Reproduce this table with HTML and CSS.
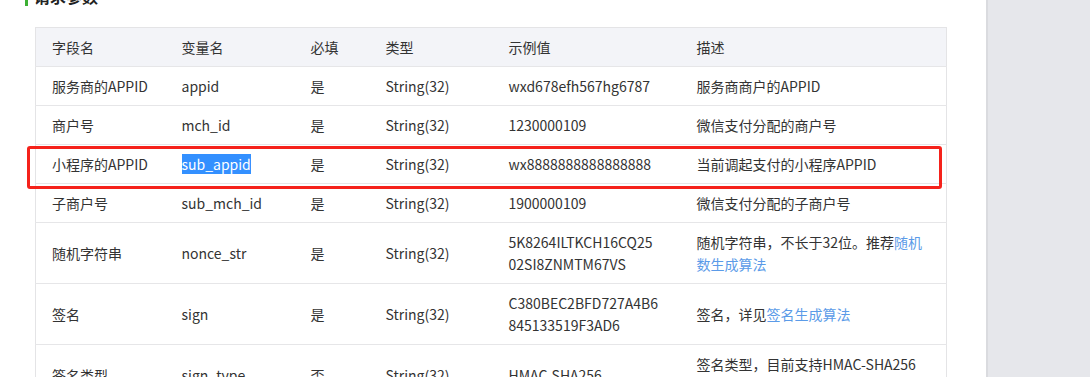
FILE: index.html
```html
<!DOCTYPE html>
<html lang="zh-CN">
<head>
    <meta charset="UTF-8">
    <meta name="viewport" content="width=device-width, initial-scale=1.0">
    <title>小程序支付 - 请求参数</title>
    <link rel="stylesheet" href="styles.css">
</head>
<body>
<div class="page">
    <div class="doc">
        <h3 class="section-title">请求参数</h3>

        <div class="table-wrap">
            <table class="params">
                <thead>
                    <tr>
                        <th class="c-name">字段名</th>
                        <th class="c-var">变量名</th>
                        <th class="c-req">必填</th>
                        <th class="c-type">类型</th>
                        <th class="c-demo">示例值</th>
                        <th class="c-desc">描述</th>
                    </tr>
                </thead>
                <tbody>
                    <tr>
                        <td>服务商的APPID</td>
                        <td>appid</td>
                        <td>是</td>
                        <td>String(32)</td>
                        <td>wxd678efh567hg6787</td>
                        <td>服务商商户的APPID</td>
                    </tr>
                    <tr>
                        <td>商户号</td>
                        <td>mch_id</td>
                        <td>是</td>
                        <td>String(32)</td>
                        <td>1230000109</td>
                        <td>微信支付分配的商户号</td>
                    </tr>
                    <tr>
                        <td>小程序的APPID</td>
                        <td><span class="selected">sub_appid</span></td>
                        <td>是</td>
                        <td>String(32)</td>
                        <td>wx8888888888888888</td>
                        <td>当前调起支付的小程序APPID</td>
                    </tr>
                    <tr>
                        <td>子商户号</td>
                        <td>sub_mch_id</td>
                        <td>是</td>
                        <td>String(32)</td>
                        <td>1900000109</td>
                        <td>微信支付分配的子商户号</td>
                    </tr>
                    <tr>
                        <td>随机字符串</td>
                        <td>nonce_str</td>
                        <td>是</td>
                        <td>String(32)</td>
                        <td>5K8264ILTKCH16CQ25<br>02SI8ZNMTM67VS</td>
                        <td>随机字符串，不长于32位。推荐<a href="#">随机数生成算法</a></td>
                    </tr>
                    <tr>
                        <td>签名</td>
                        <td>sign</td>
                        <td>是</td>
                        <td>String(32)</td>
                        <td>C380BEC2BFD727A4B6<br>845133519F3AD6</td>
                        <td>签名，详见<a href="#">签名生成算法</a></td>
                    </tr>
                    <tr>
                        <td>签名类型</td>
                        <td>sign_type</td>
                        <td>否</td>
                        <td>String(32)</td>
                        <td>HMAC-SHA256</td>
                        <td>签名类型，目前支持HMAC-SHA256<br>和MD5，默认为MD5</td>
                    </tr>
                </tbody>
            </table>

            <!-- red box drawn round the sub_appid row -->
            <div class="mark"></div>
        </div>
    </div>

    <div class="side"></div>
</div>
</body>
</html>
```

FILE: styles.css
```css
body
{
    margin:0;
    background-color:white;
    color:#333;
    font-family:"Noto Sans CJK SC","Microsoft YaHei",sans-serif;
    font-size:14px;
    overflow:hidden;
}
.page
{
    display:flex;
    height:377px;
}
.doc
{
    width:986px;
    flex-shrink:0;
    padding-left:25px;
    box-sizing:border-box;
}
.side
{
    flex:1;
    background-color:#e6e7eb;
    border-left:2px solid #dadbdf;
}

.section-title
{
    margin:-14px 0 0 0;
    padding-left:6px;
    border-left:3px solid #3cb034;
    font-size:16px;
    font-weight:bold;
    line-height:20px;
    color:#222;
}

.table-wrap
{
    position:relative;
    margin-top:21px;
    margin-left:10px;
}
.params
{
    width:911px;
    table-layout:fixed;
    border-collapse:collapse;
    border:1px solid #e4e4e6;
}
.params th,
.params td
{
    box-sizing:border-box;
    padding:8px 16px;
    line-height:22px;
    text-align:left;
    vertical-align:middle;
    font-weight:normal;
    border-bottom:1px solid #e6e6e8;
    word-break:break-all;
}
.params th
{
    background-color:#f3f4f8;
}
.c-name { width:130px; }
.c-var  { width:129px; }
.c-req  { width:75px; }
.c-type { width:123px; }
.c-demo { width:188px; }
.c-desc { width:266px; }

.params a
{
    color:#5b9be8;
    text-decoration:none;
}
.selected
{
    background-color:#3390ff;
    color:white;
}

.mark
{
    position:absolute;
    left:-8px;
    top:119px;
    width:909px;
    height:37px;
    border:3px solid #f5221b;
    border-radius:3px;
}
```
